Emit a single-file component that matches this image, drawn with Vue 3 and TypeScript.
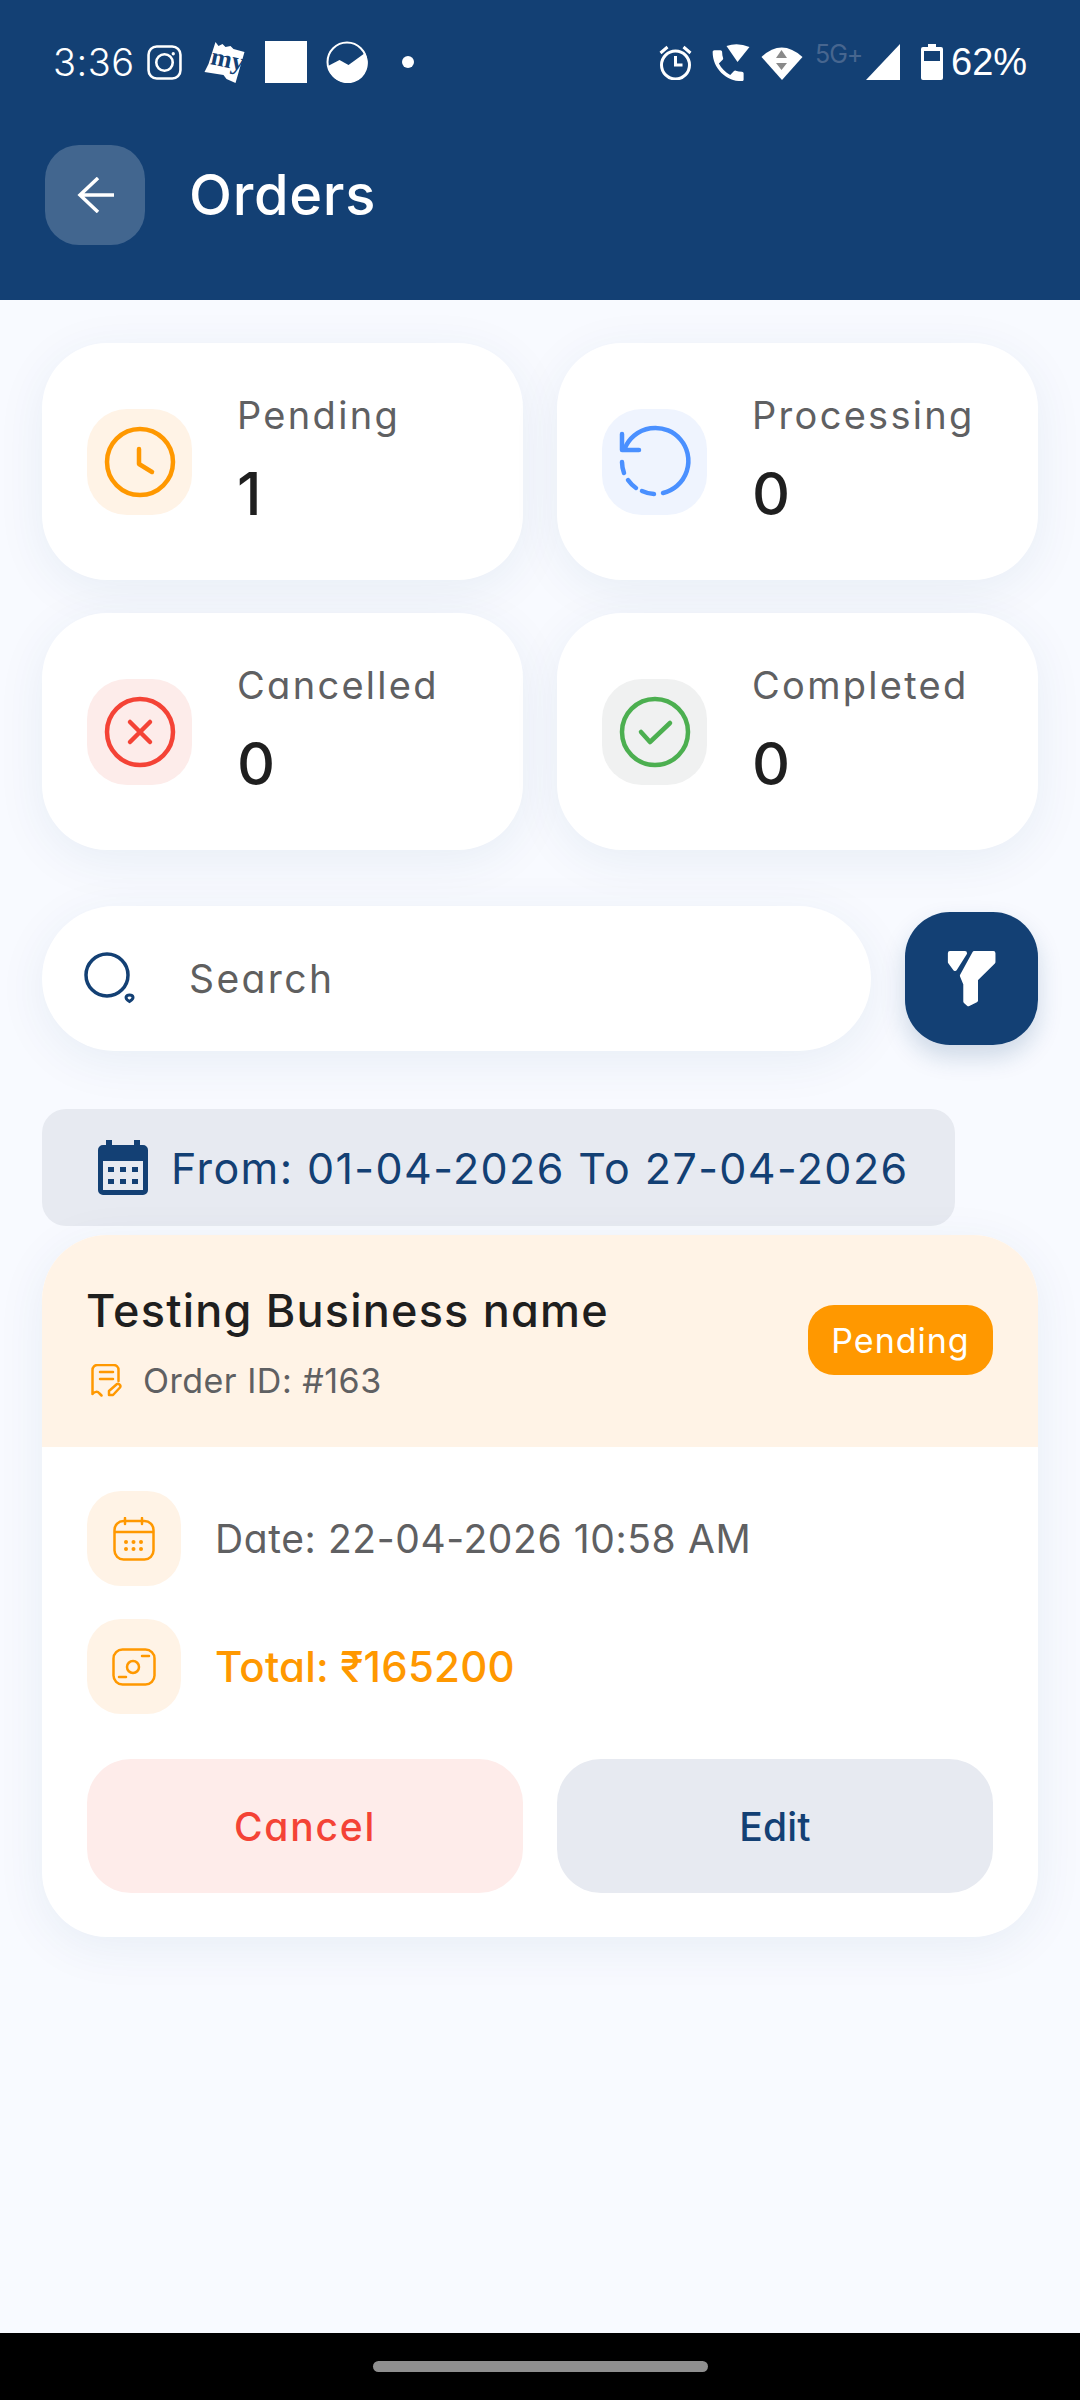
<script setup lang="ts">
interface Stat {
  key: string;
  label: string;
  value: number;
}

const stats: Stat[] = [
  { key: "pending", label: "Pending", value: 1 },
  { key: "processing", label: "Processing", value: 0 },
  { key: "cancelled", label: "Cancelled", value: 0 },
  { key: "completed", label: "Completed", value: 0 },
];

const order = {
  business: "Testing Business name",
  id: "#163",
  status: "Pending",
  date: "22-04-2026 10:58 AM",
  total: "₹165200",
};
</script>

<template>
  <div class="app">
    <header class="top">
      <!-- status bar -->
      <div class="status">
        <div class="status-left">
          <span class="time">3:36</span>
          <svg class="ig" width="35" height="35" viewBox="0 0 34 34" fill="none" stroke="#fff" stroke-width="2.5">
            <rect x="1.5" y="1.5" width="31" height="31" rx="8" />
            <circle cx="17" cy="17" r="8" />
            <circle cx="25.5" cy="8.5" r="1.6" fill="#fff" stroke="none" />
          </svg>
          <svg class="my" width="42" height="41" viewBox="0 0 41 41">
            <path d="M11 0 14 4 18 2 21 5 26 4 29 7 40 10 31 41 22 37 19 33 0 30 4 22Z" fill="#fff" />
            <text x="6" y="25" transform="rotate(12 20 20)" class="my-text">my</text>
          </svg>
          <span class="square"></span>
          <svg class="chart" width="42" height="42" viewBox="0 0 41 42">
            <circle cx="20.5" cy="21" r="19.5" fill="none" stroke="#fff" stroke-width="2" />
            <path d="M1.5 25 13 19 22 24 38.5 12A20 20 0 1 1 1.5 25Z" fill="#fff" />
          </svg>
          <span class="dot"></span>
        </div>
        <div class="status-right">
          <svg width="35" height="36" viewBox="0 0 34 36" fill="none" stroke="#fff" stroke-width="3">
            <circle cx="17" cy="21" r="14" />
            <path d="M17 12v9h7" />
            <path d="M2 9l7-6M32 9l-7-6" />
          </svg>
          <svg class="call" width="39" height="39" viewBox="0 0 38 39" fill="#fff">
            <path transform="translate(-5 2) scale(1.72)" d="M6.62 10.79c1.44 2.83 3.76 5.14 6.59 6.59l2.2-2.2c.27-.27.67-.36 1.02-.24 1.12.37 2.33.57 3.57.57.55 0 1 .45 1 1V20c0 .55-.45 1-1 1-9.39 0-17-7.61-17-17 0-.55.45-1 1-1h3.5c.55 0 1 .45 1 1 0 1.25.2 2.45.57 3.57.11.35.03.74-.25 1.02l-2.2 2.2z" />
            <path d="M14 3Q25-1 37 4L25 19Z" />
          </svg>
          <svg class="wifi" width="42" height="36" viewBox="0 0 41 36">
            <path d="M0 13Q20-6 41 13L20.5 36Z" fill="#fff" />
            <path d="M20 6 25.5 14H14.5ZM14.5 19H25.5L20 26Z" fill="#8a8a8a" />
          </svg>
          <span class="net">5G+</span>
          <svg class="signal" width="36" height="36" viewBox="0 0 34 36">
            <path d="M0 36 34 0V36Z" fill="#fff" />
          </svg>
          <svg class="battery" width="22" height="36" viewBox="0 0 22 36">
            <path d="M7 0h8v3h5a2 2 0 0 1 2 2v29a2 2 0 0 1-2 2H2a2 2 0 0 1-2-2V5a2 2 0 0 1 2-2h5Z" fill="#fff" />
            <rect x="3" y="7" width="16" height="10" fill="#134074" />
          </svg>
          <span class="percent">62%</span>
        </div>
      </div>

      <div class="title-row">
        <button class="back">
          <svg width="37" height="36" viewBox="0 0 37 36" fill="none" stroke="#fff" stroke-width="3.5">
            <path d="M37 18H3M21 1 3 18l18 17" />
          </svg>
        </button>
        <h1>Orders</h1>
      </div>
    </header>

    <main class="content">
      <!-- counters -->
      <section class="stats">
        <div v-for="stat in stats" :key="stat.key" class="stat-card">
          <div :class="['stat-icon', stat.key]">
            <svg width="80" height="80" viewBox="0 0 80 80" fill="none" stroke="currentColor" stroke-width="4.5" stroke-linecap="round" stroke-linejoin="round">
              <template v-if="stat.key === 'pending'">
                <circle cx="40" cy="40" r="33" />
                <path d="M39 27v15l13 8" />
              </template>
              <template v-else-if="stat.key === 'processing'">
                <path d="M10 26A33 33 0 1 1 48 71" />
                <path d="M7 12v16h17" />
                <path d="M7 40a33 33 0 0 0 2 11M13 58a33 33 0 0 0 8 8M27 69a33 33 0 0 0 12 3" />
              </template>
              <template v-else-if="stat.key === 'cancelled'">
                <circle cx="40" cy="40" r="33" />
                <path d="M30 30l20 20M50 30 30 50" />
              </template>
              <template v-else>
                <circle cx="40" cy="40" r="33" />
                <path d="M26 40l9 10 20-19" />
              </template>
            </svg>
          </div>
          <div class="stat-text">
            <div class="stat-label">{{ stat.label }}</div>
            <div class="stat-value">{{ stat.value }}</div>
          </div>
        </div>
      </section>

      <!-- search -->
      <section class="search-row">
        <div class="search">
          <svg width="54" height="54" viewBox="0 0 54 54" fill="none" stroke="#134074" stroke-width="3.5">
            <circle cx="24" cy="23" r="21" />
            <path d="M46.5 49.5c-2.5-1.5-3.8-3-3.4-4.5.4-1.3 1.6-2 3.4-2s3.2.7 3.500 2c.3 1.500-1 3-3.500 4.500Z" stroke-width="3" />
          </svg>
          <span class="search-text">Search</span>
        </div>
        <button class="filter">
          <svg width="57" height="63" viewBox="1212 206 164 184" fill="#fff" stroke="#fff" stroke-width="12" stroke-linejoin="round">
            <path d="M1231 224H1275L1246 270 1231 250Z" />
            <path d="M1302 224H1358V250L1307 300V362L1285 373 1276 365V314L1266 290Z" />
          </svg>
        </button>
      </section>

      <!-- date range -->
      <div class="range">
        <svg width="50" height="55" viewBox="0 0 50 55">
          <path d="M8 0h6v5h22V0h6v5h3a5 5 0 0 1 5 5v40a5 5 0 0 1-5 5H5a5 5 0 0 1-5-5V10a5 5 0 0 1 5-5h3Z" fill="#134074" />
          <rect x="5" y="21" width="40" height="29" fill="#e7eaf1" />
          <path d="M10 27h6v5h-6ZM22 27h6v5h-6ZM34 27h6v5h-6ZM10 39h6v5h-6ZM22 39h6v5h-6ZM34 39h6v5h-6Z" fill="#134074" />
        </svg>
        <span>From: 01-04-2026 To 27-04-2026</span>
      </div>

      <!-- order card -->
      <article class="order">
        <div class="order-head">
          <div class="order-title">
            <div class="order-name">{{ order.business }}</div>
            <div class="order-id">
              <svg width="32" height="33" viewBox="0 0 32 33" fill="none" stroke="#ff9800" stroke-width="2.5" stroke-linecap="round" stroke-linejoin="round">
                <path d="M1.5 30V6a5 5 0 0 1 5-5h16a5 5 0 0 1 5 5v11M1.5 30c2-2.5 5-3 7-.5l2 2" />
                <path d="M9 8h13M9 15h13" />
                <path d="M18 31v-4l8-7c1.500-1 4.500 1.500 3 3.500l-7 7.500Z" />
              </svg>
              <span>Order ID: {{ order.id }}</span>
            </div>
          </div>
          <span class="badge">{{ order.status }}</span>
        </div>

        <div class="order-body">
          <div class="info-row">
            <div class="info-icon">
              <svg width="42" height="44" viewBox="0 0 42 44" fill="none" stroke="#ff9800" stroke-width="2.5" stroke-linecap="round">
                <rect x="1.5" y="4" width="39" height="38.5" rx="9" />
                <path d="M2 15h38M12 1v6M29 1v6" />
                <g fill="#ff9800" stroke="none">
                  <circle cx="13" cy="25" r="2" />
                  <circle cx="20.5" cy="25" r="2" />
                  <circle cx="28" cy="25" r="2" />
                  <circle cx="13" cy="32" r="2" />
                  <circle cx="20.5" cy="32" r="2" />
                  <circle cx="28" cy="32" r="2" />
                </g>
              </svg>
            </div>
            <span class="info-date">Date: {{ order.date }}</span>
          </div>
          <div class="info-row">
            <div class="info-icon">
              <svg width="44" height="38" viewBox="0 0 44 38" fill="none" stroke="#ff9800" stroke-width="2.5" stroke-linecap="round">
                <rect x="1.5" y="1.5" width="41" height="35" rx="9" />
                <circle cx="21" cy="19" r="6" />
                <path d="M30 8h7M7 29h7" />
              </svg>
            </div>
            <span class="info-total">Total: {{ order.total }}</span>
          </div>
          <div class="actions">
            <button class="btn cancel">Cancel</button>
            <button class="btn edit">Edit</button>
          </div>
        </div>
      </article>
    </main>

    <footer class="nav">
      <span class="pill"></span>
    </footer>
  </div>
</template>

<style scoped>
.app {
  width: 1080px;
  height: 2400px;
  display: flex;
  flex-direction: column;
  background: #f8faff;
  font-family: Inter, "Noto Sans", sans-serif;
  font-feature-settings: "cv11";
  color: #1f1f1f;
}

button {
  border: none;
  padding: 0;
  font-family: inherit;
  font-feature-settings: inherit;
}

/* header */
.top {
  height: 300px;
  background: #134074;
  color: #fff;
  flex-shrink: 0;
}

.status {
  height: 42px;
  padding: 41px 53px 0;
  display: flex;
  align-items: center;
  justify-content: space-between;
}

.status-left,
.status-right {
  display: flex;
  align-items: center;
}

.time {
  width: 80px;
  font-size: 38px;
  font-weight: 300;
  letter-spacing: 0.5px;
  margin-right: 14px;
  white-space: nowrap;
}

.my {
  margin-left: 22px;
}

.my-text {
  font-family: "Liberation Serif", serif;
  font-weight: 700;
  font-size: 25px;
  fill: #134074;
}

.square {
  width: 42px;
  height: 42px;
  background: #fff;
  margin-left: 19px;
}

.chart {
  margin-left: 19px;
}

.dot {
  width: 12px;
  height: 12px;
  border-radius: 50%;
  background: #fff;
  margin-left: 34px;
}

.call {
  margin-left: 19px;
}

.wifi {
  margin-left: 10px;
}

.net {
  font-size: 25px;
  font-weight: 400;
  letter-spacing: -1px;
  color: #47668f;
  width: 44px;
  margin: -16px 0 0 12px;
  white-space: nowrap;
}

.signal {
  margin-left: 6px;
}

.battery {
  margin-left: 20px;
}

.percent {
  font-family: "Liberation Sans", sans-serif;
  font-size: 38px;
  margin-left: 8px;
  width: 76px;
  white-space: nowrap;
}

.title-row {
  display: flex;
  align-items: center;
  margin-top: 62px;
  padding-left: 45px;
  gap: 44px;
}

.back {
  width: 100px;
  height: 100px;
  border-radius: 34px;
  background: rgba(255, 255, 255, 0.2);
  display: flex;
  align-items: center;
  justify-content: center;
}

h1 {
  margin: 0;
  font-size: 56px;
  font-weight: 500;
  letter-spacing: 0.7px;
}

/* main */
.content {
  flex: 1;
  padding: 43px 42px 0;
}

.stats {
  display: grid;
  grid-template-columns: 481px 481px;
  grid-auto-rows: 237px;
  gap: 33px 34px;
}

.stat-card {
  display: flex;
  align-items: center;
  gap: 45px;
  padding-left: 45px;
  background: #fff;
  border-radius: 65px;
  box-shadow: 0 10px 50px rgba(19, 64, 116, 0.07);
}

.stat-icon {
  width: 105px;
  height: 106px;
  border-radius: 40px;
  display: flex;
  align-items: center;
  justify-content: center;
  flex-shrink: 0;
}

.stat-icon.pending {
  background: #fff3e6;
  color: #ff9800;
}

.stat-icon.processing {
  background: #eff4fe;
  color: #4a90ff;
}

.stat-icon.cancelled {
  background: #fdecea;
  color: #f44336;
}

.stat-icon.completed {
  background: #f0f1f1;
  color: #4caf50;
}

.stat-label {
  font-size: 38px;
  line-height: 48px;
  letter-spacing: 2.3px;
  color: #5f6062;
}

.stat-value {
  font-size: 59px;
  line-height: 76px;
  font-weight: 500;
  margin-top: 17px;
}

.search-row {
  display: flex;
  align-items: center;
  justify-content: space-between;
  margin-top: 56px;
}

.search {
  width: 829px;
  height: 145px;
  border-radius: 73px;
  background: #fff;
  box-shadow: 0 10px 50px rgba(19, 64, 116, 0.07);
  display: flex;
  align-items: center;
  padding-left: 41px;
  box-sizing: border-box;
  gap: 52px;
}

.search-text {
  font-size: 39px;
  letter-spacing: 2.4px;
  color: #5f5f5f;
}

.filter {
  width: 133px;
  height: 133px;
  border-radius: 45px;
  background: #134074;
  box-shadow: 0 12px 24px rgba(19, 64, 116, 0.18);
  display: flex;
  align-items: center;
  justify-content: center;
}

.range {
  width: 913px;
  height: 117px;
  margin-top: 58px;
  padding-left: 56px;
  display: flex;
  align-items: center;
  gap: 23px;
  border-radius: 24px;
  background: #e7eaf1;
  color: #134074;
  font-size: 43px;
  letter-spacing: 1.4px;
  box-sizing: border-box;
  white-space: nowrap;
}

.order {
  margin-top: 9px;
  border-radius: 65px;
  background: #fff;
  overflow: hidden;
  box-shadow: 0 10px 50px rgba(19, 64, 116, 0.07);
}

.order-head {
  height: 212px;
  padding: 0 45px;
  background: #fff3e6;
  display: flex;
  align-items: center;
  justify-content: space-between;
}

.order-title {
  padding-bottom: 3px;
}

.order-name {
  font-size: 45px;
  font-weight: 500;
  line-height: 64px;
  letter-spacing: 1.2px;
  margin-left: -1px;
}

.order-id {
  display: flex;
  align-items: center;
  gap: 20px;
  margin: 17px 0 0 4px;
  font-size: 34px;
  letter-spacing: 0.5px;
  color: #5f6062;
}

.badge {
  margin: -2px 0 0;
  width: 185px;
  height: 70px;
  border-radius: 26px;
  background: #ff9800;
  color: #fff;
  font-size: 34px;
  letter-spacing: 1px;
  display: flex;
  align-items: center;
  justify-content: center;
}

.order-body {
  padding: 44px 45px;
  display: flex;
  flex-direction: column;
  gap: 33px;
}

.info-row {
  display: flex;
  align-items: center;
  gap: 34px;
}

.info-icon {
  width: 94px;
  height: 95px;
  border-radius: 34px;
  background: #fff3e6;
  display: flex;
  align-items: center;
  justify-content: center;
}

.info-date {
  font-size: 39px;
  letter-spacing: 0.6px;
  color: #5f6062;
}

.info-total {
  font-size: 42px;
  font-weight: 500;
  letter-spacing: 0.2px;
  color: #ff9800;
}

.actions {
  display: grid;
  grid-template-columns: 1fr 1fr;
  gap: 34px;
  margin-top: 12px;
}

.btn {
  height: 134px;
  border-radius: 44px;
  font-size: 39px;
  font-weight: 500;
}

.cancel {
  background: #feecea;
  color: #f44336;
  letter-spacing: 1.8px;
}

.edit {
  background: #e7eaf1;
  color: #134074;
  letter-spacing: 0.2px;
}

.nav {
  height: 67px;
  background: #000;
  display: flex;
  align-items: center;
  justify-content: center;
  flex-shrink: 0;
}

.pill {
  width: 335px;
  height: 11px;
  border-radius: 6px;
  background: #8f8f8f;
}
</style>
